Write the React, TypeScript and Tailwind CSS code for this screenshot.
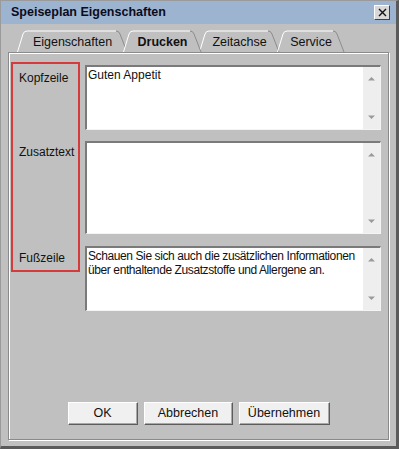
import React from "react";

type TabProps = {
  label: string;
  width: number;
  active?: boolean;
  className?: string;
};

function Tab(props: TabProps) {
  const w = props.width;
  const d = `M0.5 22 L6 4 Q7 1 10 1 L${w - 12} 1 Q${w - 9} 1 ${w - 8} 4 L${w - 1} 22`;
  return (
    <div
      className={`relative h-[22px] shrink-0 ${props.active ? "z-10" : ""} ${props.className ?? ""}`}
      style={{ width: w }}
    >
      <svg className="absolute inset-0" width={w} height={22}>
        {props.active && <path d={d + " Z"} fill="#c0c0c0" stroke="none" />}
        <path d={`M0.5 22 L6 4 Q7 1 10 1 L${w - 12} 1`} fill="none" stroke="#ffffff" strokeWidth="1" />
        <path d={`M${w - 12} 1 Q${w - 9} 1 ${w - 8} 4 L${w - 1} 22`} fill="none" stroke="#8c8c8c" strokeWidth="1" />
      </svg>
      <span
        className={`relative flex h-full items-center justify-center pt-[3px] text-[12.5px] text-[#111] ${props.active ? "font-bold" : ""}`}
      >
        {props.label}
      </span>
    </div>
  );
}

function ScrollBar() {
  return (
    <div className="flex w-[17px] flex-col justify-between bg-[#eeeeee] py-[9px]">
      <svg width="17" height="5" viewBox="0 0 17 5">
        <path d="M5 4.5 L8.5 1 L12 4.5 Z" fill="#9a9a9a" />
      </svg>
      <svg width="17" height="5" viewBox="0 0 17 5">
        <path d="M5 0.5 L8.5 4 L12 0.5 Z" fill="#9a9a9a" />
      </svg>
    </div>
  );
}

function TextBox({ height, children }: { height: number; children?: React.ReactNode }) {
  return (
    <div
      className="flex border-t-2 border-l-2 border-r border-b border-t-[#7a7a7a] border-l-[#7a7a7a] border-r-[#f4f4f4] border-b-[#f4f4f4] bg-white"
      style={{ height }}
    >
      <div className="flex-1 px-[1px] pt-[1px] text-[12px] leading-[14px] text-[#111]">{children}</div>
      <ScrollBar />
    </div>
  );
}

function Button({ label, width }: { label: string; width: number }) {
  return (
    <button
      className="h-[23px] border border-t-white border-l-white border-r-[#5c5c5c] border-b-[#5c5c5c] bg-[#f0f0f0] text-[12.5px] text-[#111] shadow-[inset_-1px_-1px_0_#a8a8a8]"
      style={{ width }}
    >
      {label}
    </button>
  );
}

export default function App() {
  return (
    <div
      className="flex h-[449px] w-[399px] flex-col border-t border-l border-r-[3px] border-b-[3px] border-t-[#9a9a9a] border-l-[#9a9a9a] border-r-[#5a5a5a] border-b-[#5a5a5a] bg-[#c0c0c0]"
      style={{ fontFamily: '"Liberation Sans", Arial, sans-serif' }}
    >
      {/* title bar */}
      <div className="flex h-[23px] shrink-0 items-center justify-between bg-[#9cb4d0] pl-[10px] pr-[6px]">
        <span className="text-[12.5px] font-bold text-[#0b0b20]">Speiseplan Eigenschaften</span>
        <div className="flex h-[15px] w-[16px] items-center justify-center border border-t-white border-l-white border-r-[#404040] border-b-[#404040] bg-[#d8d8d8]">
          <svg width="9" height="9" viewBox="0 0 9 9">
            <path d="M1 1 L8 8 M8 1 L1 8" stroke="#111" strokeWidth="1.4" />
          </svg>
        </div>
      </div>

      {/* tabs */}
      <div className="mt-[6px] flex h-[22px] shrink-0 pl-[16px]">
        <Tab label="Eigenschaften" width={111} />
        <Tab label="Drucken" width={79} active className="-ml-[5px]" />
        <Tab label="Zeitachse" width={81} className="-ml-[3px]" />
        <Tab label="Service" width={68} className="-ml-[3px]" />
      </div>

      {/* panel */}
      <div className="mx-[7px] mb-[6px] flex flex-1 flex-col border border-[#8a8a8a] shadow-[inset_1px_1px_0_#fff,1px_1px_0_#fff]">
        <div className="flex pl-[2px] pt-[9px]">
          <div className="flex h-[210px] w-[69px] flex-col border-2 border-[#d63a3a] pl-[6px] text-[12px] leading-[14px] text-[#111]">
            <span className="mt-[7px]">Kopfzeile</span>
            <span className="mt-[60px]">Zusatztext</span>
            <span className="mt-[92px]">Fußzeile</span>
          </div>
          <div className="ml-[5px] mt-[3px] flex w-[296px] flex-col">
            <TextBox height={65}>Guten Appetit</TextBox>
            <div className="h-[11px]" />
            <TextBox height={93} />
            <div className="h-[12px]" />
            <TextBox height={65}>
              <span className="tracking-[-0.4px]">
                Schauen Sie sich auch die zusätzlichen Informationen über enthaltende Zusatzstoffe und Allergene an.
              </span>
            </TextBox>
          </div>
        </div>
        <div className="mb-[14px] mt-auto flex justify-center gap-[6px]">
          <Button label="OK" width={70} />
          <Button label="Abbrechen" width={89} />
          <Button label="Übernehmen" width={91} />
        </div>
      </div>
    </div>
  );
}
